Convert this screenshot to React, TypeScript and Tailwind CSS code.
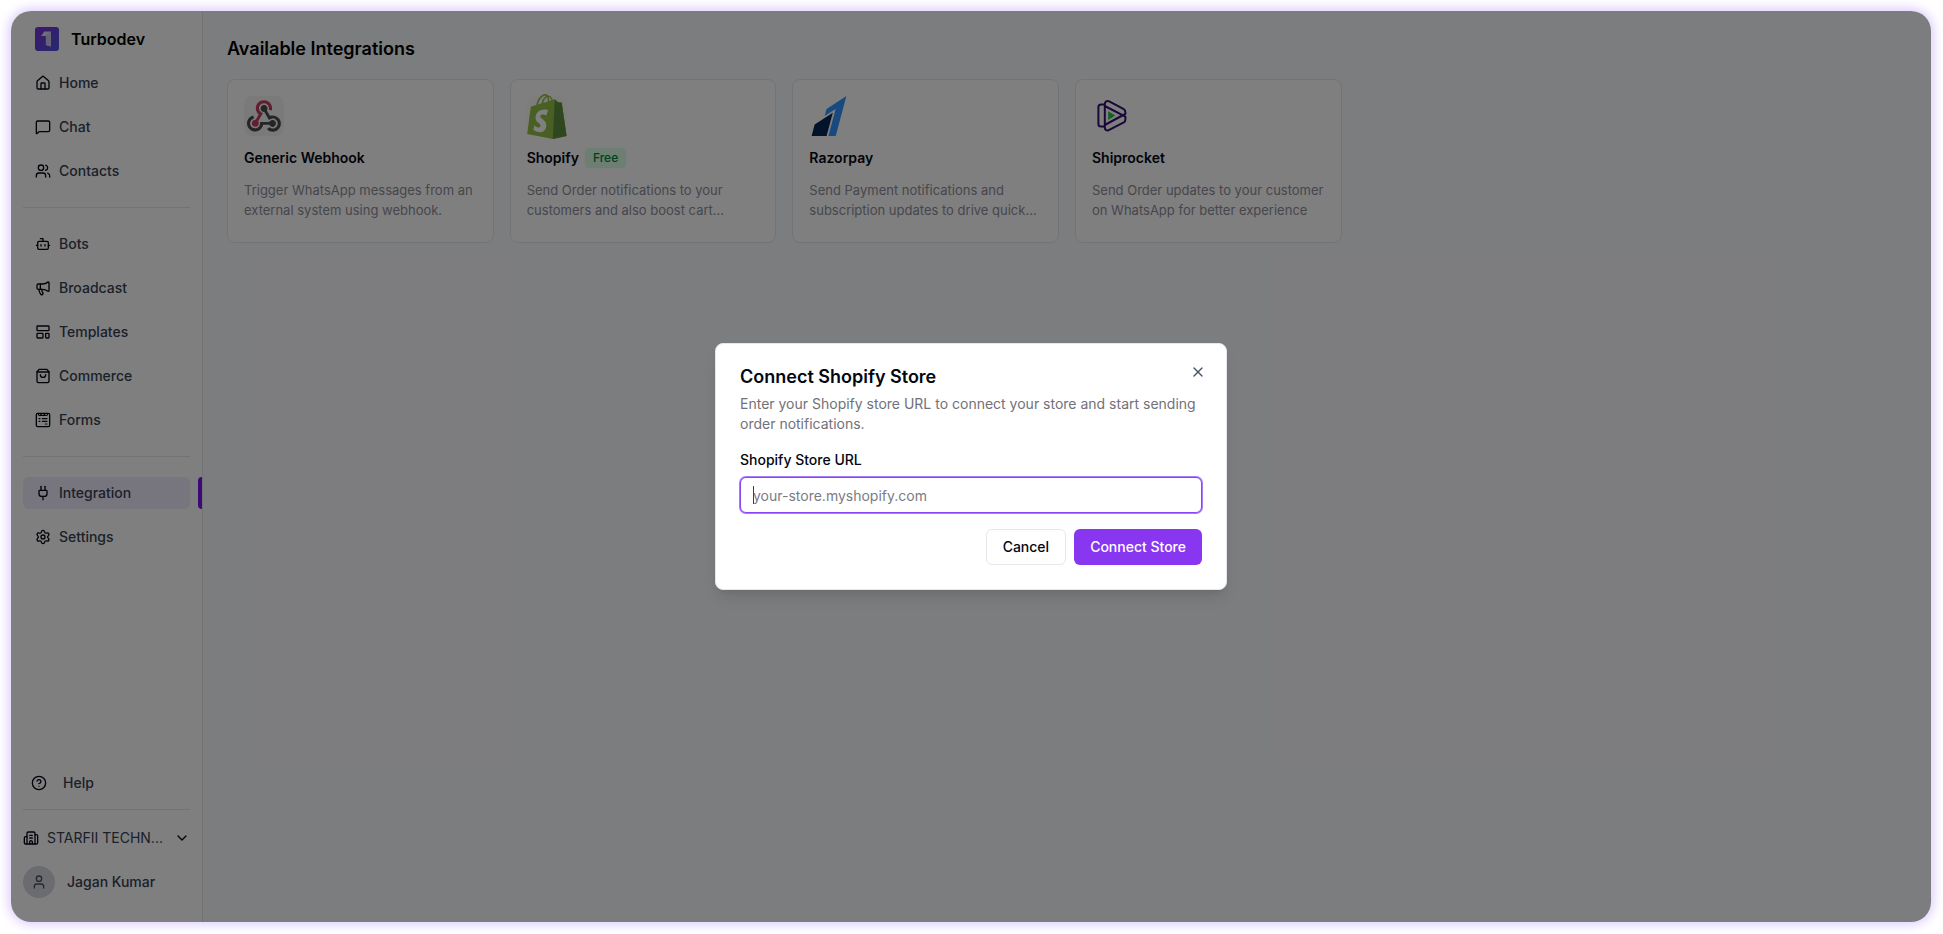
import type { ReactNode } from "react";
import {
  Bot,
  Building2,
  ChevronDown,
  CircleHelp,
  House,
  LayoutTemplate,
  Megaphone,
  MessageSquare,
  Plug,
  Settings,
  User,
  Users,
  X,
} from "lucide-react";

function BrandLogo() {
  return (
    <svg viewBox="0 0 24 24" className="size-6 shrink-0" aria-hidden="true">
      <defs>
        <linearGradient id="brand" x1="0" y1="0" x2="1" y2="1">
          <stop offset="0" stopColor="#7a30d8" />
          <stop offset="1" stopColor="#4a55dc" />
        </linearGradient>
      </defs>
      <rect width="24" height="24" rx="3" fill="url(#brand)" />
      <path d="M9.3 4.5H16V19.6L10.9 18V9H6.2Z" fill="#e4defa" />
      <path d="M16 4.5V19.6L10.9 18V8Z" fill="#cfc6f2" />
    </svg>
  );
}

function BagIcon() {
  return (
    <svg viewBox="0 0 24 24" className="size-4 shrink-0" fill="none" stroke="currentColor" strokeWidth="2" strokeLinecap="round" strokeLinejoin="round" aria-hidden="true">
      <path d="M6 2 3 6v14a2 2 0 0 0 2 2h14a2 2 0 0 0 2-2V6l-3-4Z" />
      <path d="M3 6h18" />
      <path d="M16 10a4 4 0 0 1-8 0" />
    </svg>
  );
}

function FormIcon() {
  return (
    <svg viewBox="0 0 24 24" className="size-4 shrink-0" fill="none" stroke="currentColor" strokeWidth="2" strokeLinecap="round" strokeLinejoin="round" aria-hidden="true">
      <rect x="2" y="2" width="20" height="20" rx="2" />
      <path d="M5 3c0 3 4 3 4 0 0 3 5 3 5 0 0 3 5 3 5 0" strokeWidth="1.8" />
      <path d="M6 10h1.5M11 10h7M6 14h1.5M11 14h7M15.5 18H18" strokeWidth="1.7" />
    </svg>
  );
}

function WebhookLogo() {
  return (
    <span className="flex size-10 items-center justify-center rounded-lg bg-[#f4f4f5]">
      <svg viewBox="0 0 256 239" className="w-[34px]" aria-hidden="true">
        <path fill="#c73a63" d="M119.54 100.503c-10.61 17.836-20.775 35.108-31.152 52.25-2.665 4.401-3.984 7.986-1.855 13.58 5.878 15.454-2.414 30.493-17.998 34.575-14.697 3.851-29.016-5.808-31.932-21.543-2.584-13.927 8.224-27.58 23.58-29.757 1.286-.184 2.6-.205 4.762-.367l23.358-39.168C73.612 95.465 64.868 78.39 66.803 57.23c1.368-14.957 7.25-27.883 18-38.477 20.59-20.288 52.002-23.573 76.246-8.001 23.284 14.958 33.948 44.094 24.858 69.031-6.854-1.858-13.756-3.732-21.343-5.79 2.854-13.865.743-26.315-8.608-36.981-6.178-7.042-14.106-10.733-23.12-12.093-18.072-2.73-35.815 8.88-41.08 26.618-5.976 20.13 3.069 36.575 27.784 48.967z" />
        <path fill="#4b4b4b" d="M149.841 79.41c7.475 13.187 15.065 26.573 22.587 39.836 38.02-11.763 66.686 9.284 76.97 31.817 12.422 27.219 3.93 59.457-20.465 76.25-25.04 17.238-56.707 14.293-78.892-7.851 5.654-4.733 11.336-9.487 17.407-14.566 21.912 14.192 41.077 13.524 55.305-3.282 12.133-14.337 11.87-35.714-.615-49.75-14.408-16.197-33.707-16.691-57.035-1.143-9.677-17.168-19.522-34.199-28.893-51.491-3.16-5.828-6.648-9.21-13.77-10.443-11.893-2.062-19.571-12.275-20.032-23.717-.453-11.316 6.214-21.545 16.634-25.53 10.322-3.949 22.435-.762 29.378 8.014 5.674 7.17 7.477 15.24 4.491 24.083-.83 2.466-1.905 4.852-3.07 7.774z" />
        <path fill="#4a4a4a" d="M167.707 187.21h-45.77c-4.387 18.044-13.863 32.612-30.19 41.876-12.693 7.2-26.373 9.641-40.933 7.29-26.808-4.323-48.728-28.456-50.658-55.63-2.184-30.784 18.975-58.147 47.178-64.293 1.947 7.071 3.915 14.21 5.862 21.264-25.876 13.202-34.832 29.836-27.59 50.636 6.375 18.304 24.484 28.337 44.147 24.457 20.08-3.962 30.204-20.65 28.968-47.432 19.036 0 38.088-.197 57.126.097 7.434.117 13.173-.654 18.773-7.208 9.22-10.784 26.191-9.811 36.121.374 10.148 10.409 9.662 27.157-1.077 37.127-10.361 9.62-26.73 9.106-36.424-1.26-1.992-2.136-3.562-4.673-5.533-7.298z" />
      </svg>
    </span>
  );
}

function ShopifyLogo() {
  return (
    <span className="flex size-10 items-center justify-center rounded-lg bg-[#fbfdf8]">
      <svg viewBox="0 0 256 292" className="h-[45px] w-10 shrink-0" aria-hidden="true">
        <path fill="#95bf47" d="M223.774 57.34c-.201-1.46-1.48-2.268-2.537-2.357-1.055-.088-23.383-1.743-23.383-1.743s-15.507-15.395-17.209-17.099c-1.703-1.703-5.029-1.185-6.32-.805-.19.056-3.388 1.043-8.678 2.68-5.18-14.906-14.322-28.604-30.405-28.604-.444 0-.901.018-1.358.044C129.31 3.407 123.644.779 118.75.779c-37.465 0-55.364 46.835-60.976 70.635-14.558 4.511-24.9 7.718-26.221 8.133-8.126 2.549-8.383 2.805-9.45 10.462C21.3 95.806.038 260.235.038 260.235l165.678 31.042 89.77-19.42S223.973 58.8 223.775 57.34zM156.49 40.848l-14.019 4.339c.005-.988.01-1.96.01-3.023 0-9.264-1.286-16.723-3.349-22.636 8.287 1.04 13.806 10.469 17.358 21.32zm-27.638-19.483c2.304 5.773 3.802 14.058 3.802 25.238 0 .572-.005 1.095-.01 1.624-9.117 2.824-19.024 5.89-28.953 8.966 5.575-21.516 16.025-31.908 25.161-35.828zm-11.131-10.537c1.617 0 3.246.549 4.805 1.622-12.007 5.65-24.877 19.88-30.312 48.297l-22.886 7.088C75.694 46.16 90.81 10.828 117.72 10.828z" />
        <path fill="#5e8e3e" d="M221.237 54.983c-1.055-.088-23.383-1.743-23.383-1.743s-15.507-15.395-17.209-17.099c-.637-.634-1.496-.959-2.394-1.099l-12.527 256.233 89.762-19.418S223.972 58.8 223.774 57.34c-.201-1.46-1.48-2.268-2.537-2.357" />
        <path fill="#fff" d="M135.242 104.585l-11.069 32.926s-9.698-5.176-21.586-5.176c-17.428 0-18.305 10.937-18.305 13.693 0 15.038 39.2 20.8 39.2 56.024 0 27.713-17.577 45.558-41.277 45.558-28.44 0-42.984-17.7-42.984-17.7l7.615-25.16s14.95 12.835 27.565 12.835c8.243 0 11.596-6.49 11.596-11.232 0-19.616-32.16-20.491-32.16-52.724 0-27.129 19.472-53.382 58.778-53.382 15.145 0 22.627 4.338 22.627 4.338" />
      </svg>
    </span>
  );
}

function RazorpayLogo() {
  return (
    <svg viewBox="0 0 24 24" className="size-10" aria-hidden="true">
      <path fill="#3395ff" d="m22.436 0-11.91 7.773-1.174 4.276 6.625-4.297L11.65 24h4.391l6.395-24z" />
      <path fill="#072654" d="M14.26 10.098 3.389 17.166 1.564 24h9.008l3.688-13.902Z" />
    </svg>
  );
}

function ShiprocketLogo() {
  return (
    <svg viewBox="0 0 40 40" className="size-10" fill="none" stroke="#32106e" strokeWidth="2" strokeLinejoin="round" aria-hidden="true">
      <path d="M12.4 8.6H9a2.6 2.6 0 0 0-2.6 2.6V28a2.6 2.6 0 0 0 2.6 2.6h3.4" />
      <path d="M12.8 32V8c0-2.6 2.2-3.7 4.4-2.6l14.6 7.8c1.4.8 1.6 2 1.6 3.4v1.2l-4 2.2L12.8 29" />
      <path d="m12.8 10 20.6 10.6v2.8c0 1.2-.4 2.2-1.6 2.9l-14.6 7.6c-2.2 1.1-4.4.2-4.4-2.4" />
      <path fill="#1fc44a" stroke="none" d="m16.2 15.2 7 4.4-7 4.4z" />
    </svg>
  );
}

const iconClass = "size-4 shrink-0";

const groups: { label: string; icon: ReactNode; active?: boolean }[][] = [
  [
    { label: "Home", icon: <House className={iconClass} /> },
    { label: "Chat", icon: <MessageSquare className={iconClass} /> },
    { label: "Contacts", icon: <Users className={iconClass} /> },
  ],
  [
    { label: "Bots", icon: <Bot className={iconClass} /> },
    { label: "Broadcast", icon: <Megaphone className={iconClass} /> },
    { label: "Templates", icon: <LayoutTemplate className={iconClass} /> },
    { label: "Commerce", icon: <BagIcon /> },
    { label: "Forms", icon: <FormIcon /> },
  ],
  [
    { label: "Integration", icon: <Plug className={iconClass} />, active: true },
    { label: "Settings", icon: <Settings className={iconClass} /> },
  ],
];

const integrations: { name: string; badge?: string; text: string; logo: ReactNode }[] = [
  { name: "Generic Webhook", text: "Trigger WhatsApp messages from an external system using webhook.", logo: <WebhookLogo /> },
  { name: "Shopify", badge: "Free", text: "Send Order notifications to your customers and also boost cart...", logo: <ShopifyLogo /> },
  { name: "Razorpay", text: "Send Payment notifications and subscription updates to drive quick...", logo: <RazorpayLogo /> },
  { name: "Shiprocket", text: "Send Order updates to your customer on WhatsApp for better experience", logo: <ShiprocketLogo /> },
];

function Sidebar() {
  return (
    <aside className="flex w-48 shrink-0 flex-col border-r border-gray-200 bg-white px-3 pt-4 pb-6 text-sm font-medium text-gray-700">
      <div className="flex items-center gap-3 px-3">
        <BrandLogo />
        <span className="text-base font-semibold text-black">Turbodev</span>
      </div>
      <nav className="mt-4 flex flex-col">
        {groups.map((group, index) => (
          <ul
            key={group[0].label}
            className={index > 0 ? "mt-5 flex flex-col gap-3 border-t border-gray-200 pt-5" : "flex flex-col gap-3"}
          >
            {group.map((item) => (
              <li key={item.label} className="relative">
                <a
                  href="#"
                  aria-current={item.active ? "page" : undefined}
                  className={
                    item.active
                      ? "flex h-8 items-center gap-2 rounded-md bg-[#eeebfd] px-3"
                      : "flex h-8 items-center gap-2 rounded-md px-3"
                  }
                >
                  <span className="text-gray-950">{item.icon}</span>
                  {item.label}
                </a>
                {item.active && <span className="absolute inset-y-0 -right-3 w-1 rounded-l bg-[#7a10ee]" />}
              </li>
            ))}
          </ul>
        ))}
      </nav>
      <div className="mt-auto flex flex-col">
        <a href="#" className="flex h-8 items-center gap-4 px-2">
          <CircleHelp className="size-4 text-gray-950" />
          Help
        </a>
        <button type="button" className="mt-2.5 flex items-center gap-2 border-t border-gray-200 pt-[18px] pb-2.5 text-left font-normal">
          <Building2 className="size-4 shrink-0 text-gray-950" />
          <span className="min-w-0 flex-1">STARFII TECHN...</span>
          <ChevronDown className="size-4 shrink-0 text-gray-950" />
        </button>
        <div className="mt-2 flex items-center gap-3">
          <span className="flex size-8 items-center justify-center rounded-full bg-[#d5d8de]">
            <User className="size-4 text-gray-600" />
          </span>
          <span>Jagan Kumar</span>
        </div>
      </div>
    </aside>
  );
}

function ConnectDialog() {
  return (
    <div
      role="dialog"
      aria-modal="true"
      aria-labelledby="dialog-title"
      className="relative w-full max-w-lg rounded-lg border border-gray-200 bg-white p-6 shadow-lg"
    >
      <h2 id="dialog-title" className="text-lg leading-[18px] font-semibold text-gray-950">
        Connect Shopify Store
      </h2>
      <p className="mt-2 text-sm text-[#71717a]">
        Enter your Shopify store URL to connect your store and start sending order notifications.
      </p>
      <form className="mt-4 flex flex-col" onSubmit={(event) => event.preventDefault()}>
        <label htmlFor="store-url" className="text-sm font-medium text-gray-950">
          Shopify Store URL
        </label>
        <div className="relative mt-[7px]">
          <input
            id="store-url"
            type="text"
            placeholder="your-store.myshopify.com"
            className="block h-9 w-full rounded-md border border-[#8b45f5] bg-white px-3 text-sm text-gray-950 ring-1 ring-[#a877fa] outline-none placeholder:text-[#7b7b84]"
          />
          <span className="absolute top-[9px] left-[13px] h-[18px] w-px bg-gray-700" />
        </div>
        <div className="mt-4 flex justify-end gap-2">
          <button type="button" className="h-9 rounded-md border border-gray-200 bg-white px-4 text-sm font-medium text-gray-950">
            Cancel
          </button>
          <button type="submit" className="h-9 rounded-md bg-[#8836ef] px-4 text-sm font-medium text-white">
            Connect Store
          </button>
        </div>
      </form>
      <button type="button" aria-label="Close" className="absolute top-5 right-5 text-gray-600">
        <X className="size-4" />
      </button>
    </div>
  );
}

export default function App() {
  return (
    <div className="flex min-h-screen bg-white pt-[11px] pr-3 pb-3 pl-[11px] font-[Inter,sans-serif]">
      <div className="relative flex flex-1 overflow-hidden rounded-[20px] shadow-[0_0_12px_2px_#d9c8fd]">
        <Sidebar />
        <main className="flex-1 bg-[#f9fafe] p-6">
          <h1 className="text-lg font-semibold text-black">Available Integrations</h1>
          <div className="mt-4 grid grid-cols-6 gap-4">
            {integrations.map((item) => (
              <article key={item.name} className="rounded-lg border border-gray-200 bg-white p-4 pb-[22px]">
                <div className="h-10">{item.logo}</div>
                <div className="mt-3 flex items-center gap-1.5">
                  <h2 className="text-sm font-semibold text-gray-950">{item.name}</h2>
                  {item.badge && (
                    <span className="rounded bg-green-100 px-2 text-xs leading-5 font-medium text-green-700">{item.badge}</span>
                  )}
                </div>
                <p className="mt-3 text-[13px] leading-5 text-[#8d8d98]">{item.text}</p>
              </article>
            ))}
          </div>
        </main>
        <div className="absolute inset-0 flex items-center justify-center bg-black/50">
          <ConnectDialog />
        </div>
      </div>
    </div>
  );
}
